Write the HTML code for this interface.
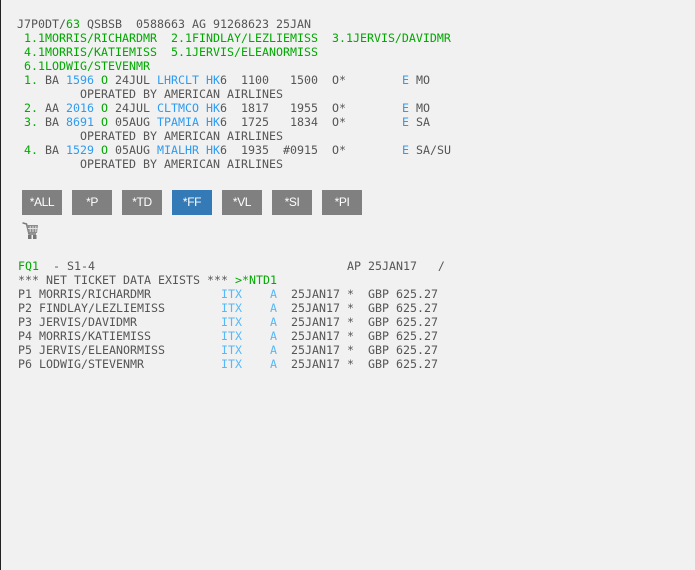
<!DOCTYPE html>
<html>
<head>
<meta charset="utf-8">
<style>
html,body{margin:0;padding:0;width:695px;height:570px;overflow:hidden;background:#f1f1f1;}
#edge{position:absolute;left:0;top:0;width:1px;height:570px;background:#222;}
pre{position:absolute;margin:0;font-family:"DejaVu Sans Mono","Liberation Mono",monospace;font-size:11.64px;line-height:14px;color:#555;white-space:pre;}
.g{color:#00a800;}
.b{color:#2e9bf0;}
.l{color:#55b8f8;}
.btn{position:absolute;top:190px;width:40px;height:25px;line-height:25px;background:#808080;color:#fff;text-align:center;font-family:"Liberation Sans",sans-serif;font-size:12px;letter-spacing:-.4px;}
.on{background:#337ab7;}
svg{position:absolute;left:22px;top:222px;}
</style>
</head>
<body>
<div id="edge"></div>
<pre style="left:17px;top:17px">J7P0DT/<span class="g">63</span> QSBSB  0588663 AG 91268623 25JAN
<span class="g"> 1.1MORRIS/RICHARDMR  2.1FINDLAY/LEZLIEMISS  3.1JERVIS/DAVIDMR</span>
<span class="g"> 4.1MORRIS/KATIEMISS  5.1JERVIS/ELEANORMISS</span>
<span class="g"> 6.1LODWIG/STEVENMR</span>
<span class="g"> 1.</span> BA <span class="b">1596</span> <span class="g">O</span> 24JUL <span class="b">LHRCLT HK</span>6  1100   1500  O*        <span class="b">E</span> MO
         OPERATED BY AMERICAN AIRLINES
<span class="g"> 2.</span> AA <span class="b">2016</span> <span class="g">O</span> 24JUL <span class="b">CLTMCO HK</span>6  1817   1955  O*        <span class="b">E</span> MO
<span class="g"> 3.</span> BA <span class="b">8691</span> <span class="g">O</span> 05AUG <span class="b">TPAMIA HK</span>6  1725   1834  O*        <span class="b">E</span> SA
         OPERATED BY AMERICAN AIRLINES
<span class="g"> 4.</span> BA <span class="b">1529</span> <span class="g">O</span> 05AUG <span class="b">MIALHR HK</span>6  1935  #0915  O*        <span class="b">E</span> SA/SU
         OPERATED BY AMERICAN AIRLINES</pre>

<div class="btn" style="left:22px">*ALL</div>
<div class="btn" style="left:72px">*P</div>
<div class="btn" style="left:122px">*TD</div>
<div class="btn on" style="left:172px">*FF</div>
<div class="btn" style="left:222px">*VL</div>
<div class="btn" style="left:272px">*SI</div>
<div class="btn" style="left:322px">*PI</div>

<svg width="17" height="17" viewBox="0 0 17 17">
<path d="M0.5 0.8 L4.5 2 L7 12 L14 12" fill="none" stroke="#777" stroke-width="1.5"/>
<path d="M4.5 3 H16 L15 11 H6.5 Z" fill="#8c8c8c"/>
<path d="M8.2 4 V10 M11 4 V10 M13.8 4 V10 M6 6.5 H15.3" stroke="#e4e4e4" stroke-width="0.9"/>
<rect x="6" y="13" width="3.5" height="4" fill="#777"/>
<rect x="11" y="13" width="3.5" height="4" fill="#777"/>
</svg>

<pre style="left:18px;top:259px"><span class="g">FQ1</span>  - S1-4                                    AP 25JAN17   /
*** NET TICKET DATA EXISTS *** <span class="g">&gt;*NTD1</span>
P1 MORRIS/RICHARDMR          <span class="l">ITX</span>    <span class="l">A</span>  25JAN17 *  GBP 625.27
P2 FINDLAY/LEZLIEMISS        <span class="l">ITX</span>    <span class="l">A</span>  25JAN17 *  GBP 625.27
P3 JERVIS/DAVIDMR            <span class="l">ITX</span>    <span class="l">A</span>  25JAN17 *  GBP 625.27
P4 MORRIS/KATIEMISS          <span class="l">ITX</span>    <span class="l">A</span>  25JAN17 *  GBP 625.27
P5 JERVIS/ELEANORMISS        <span class="l">ITX</span>    <span class="l">A</span>  25JAN17 *  GBP 625.27
P6 LODWIG/STEVENMR           <span class="l">ITX</span>    <span class="l">A</span>  25JAN17 *  GBP 625.27</pre>
</body>
</html>
